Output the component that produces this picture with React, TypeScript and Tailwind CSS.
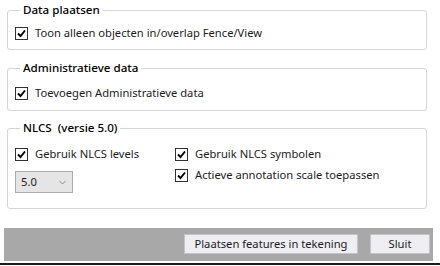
import React from "react";

function Box() {
  return (
    <span className="w-[13px] h-[13px] border border-[#333333] bg-white flex items-center justify-center shrink-0">
      <svg width="11" height="11" viewBox="0 0 11 11">
        <path d="M2 5.5 L4.5 8 L9 2.5" stroke="#000" strokeWidth="1.9" fill="none" />
      </svg>
    </span>
  );
}

function CheckRow({ label }: { label: string }) {
  return (
    <div className="flex items-center h-[16px] gap-[7px]">
      <Box />
      <span className="whitespace-nowrap">{label}</span>
    </div>
  );
}

function Group({ title, children, className }: { title: string; children: React.ReactNode; className?: string }) {
  return (
    <fieldset className={`border border-[#d5d5d5] rounded-[3px] pl-[7px] ${className ?? ""}`}>
      <legend className="ml-[5px] px-[3px] h-[16px] leading-[16px] font-medium text-[11.6px] text-black whitespace-pre">{title}</legend>
      {children}
    </fieldset>
  );
}

export default function App() {
  return (
    <div
      className="w-[440px] h-[266px] bg-white flex flex-col text-[11.2px] leading-[16px] text-[#1b1b1b] overflow-hidden"
      style={{ fontFamily: '"Segoe UI", "Noto Sans", sans-serif' }}
    >
      <div className="flex flex-col px-[7px] pt-[2px] w-[434px]">
        <Group title="Data plaatsen" className="pb-[8px]">
          <div className="mt-[7px]">
            <CheckRow label="Toon alleen objecten in/overlap Fence/View" />
          </div>
        </Group>

        <Group title="Administratieve data" className="mt-[10px] pb-[9px]">
          <div className="mt-[9px]">
            <CheckRow label="Toevoegen Administratieve data" />
          </div>
        </Group>

        <Group title="NLCS  (versie 5.0)" className="mt-[9px] pb-[15px]">
          <div className="mt-[10px] flex">
            <div className="w-[160px] flex flex-col">
              <CheckRow label="Gebruik NLCS levels" />
              <div className="mt-[9px] w-[58px] h-[22px] border border-[#acacac] bg-[#e5e5e5] flex items-center justify-between pl-[5px] pr-[6px]">
                <span>5.0</span>
                <svg width="7" height="5" viewBox="0 0 7 5">
                  <path d="M0.5 1 L3.5 4 L6.5 1" stroke="#8a8a8a" strokeWidth="1" fill="none" />
                </svg>
              </div>
            </div>
            <div className="flex flex-col gap-[5px]">
              <CheckRow label="Gebruik NLCS symbolen" />
              <CheckRow label="Actieve annotation scale toepassen" />
            </div>
          </div>
        </Group>
      </div>

      <div className="mt-[19px] mx-[4px] w-[429px] h-[33px] bg-[#a8a8a8] flex items-start justify-end gap-[12px] pt-[6px] pr-[3px]">
        <button className="w-[174px] h-[20px] border border-[#c2c2c8] bg-[#eeeef3] leading-[18px] text-center whitespace-nowrap">
          Plaatsen features in tekening
        </button>
        <button className="w-[60px] h-[20px] border border-[#c2c2c8] bg-[#eeeef3] leading-[18px] text-center">
          Sluit
        </button>
      </div>
      <div className="mt-[2px] h-[2px] bg-[#1a1a1a]" />
    </div>
  );
}
